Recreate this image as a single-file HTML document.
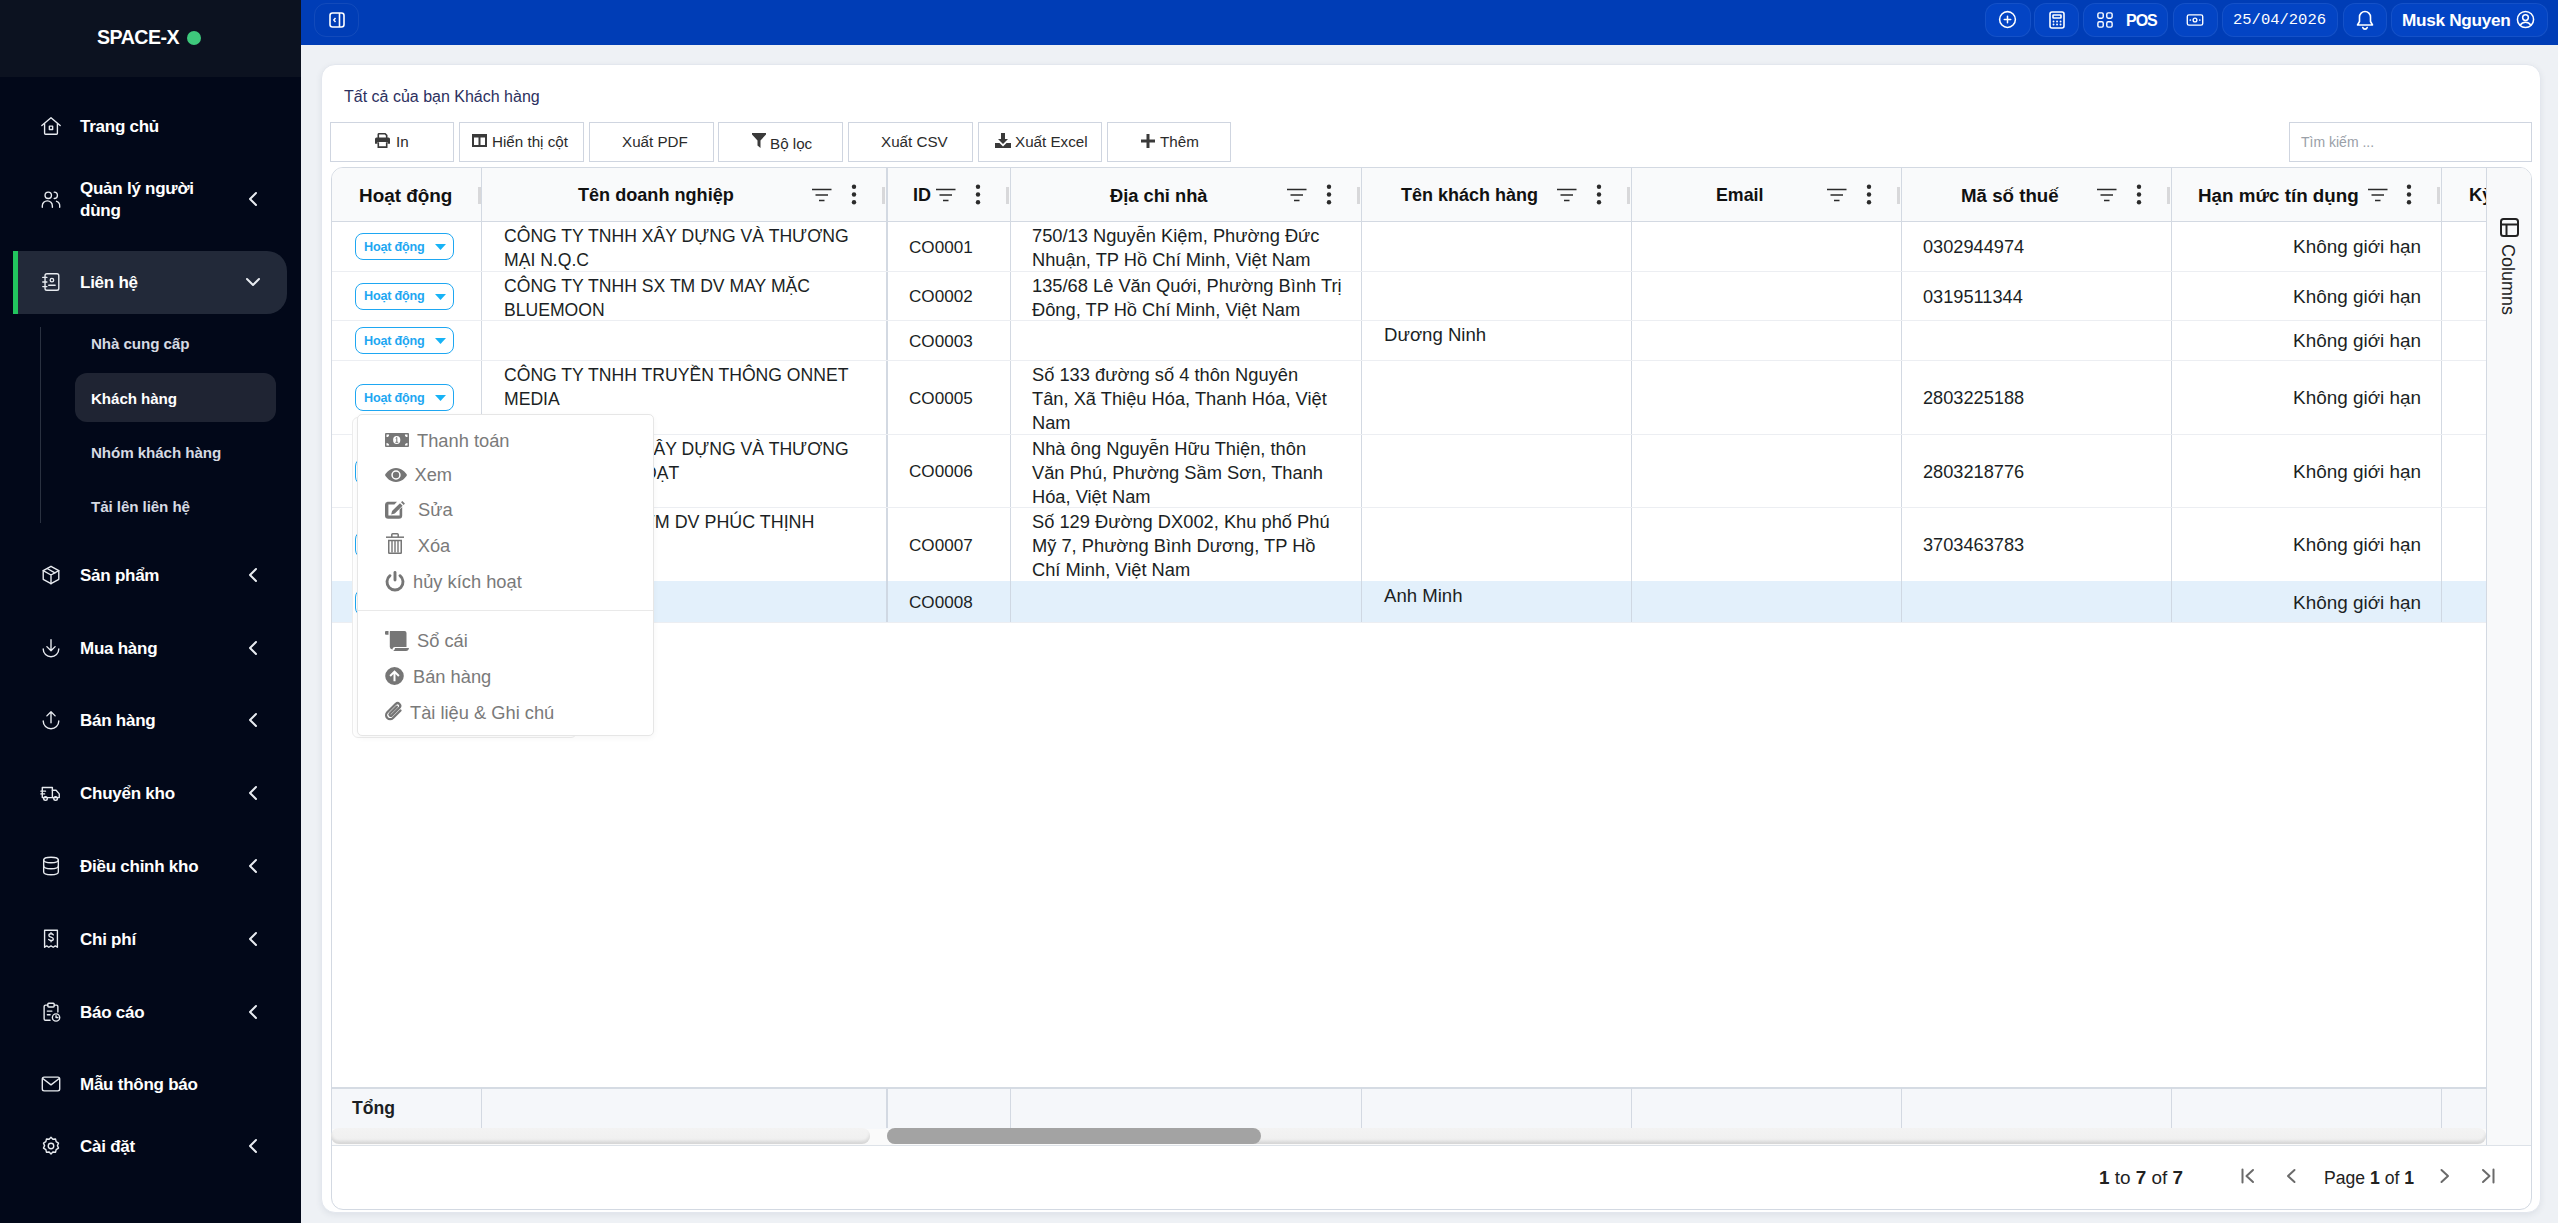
<!DOCTYPE html><html><head><meta charset="utf-8"><style>
*{box-sizing:border-box;margin:0;padding:0}
html,body{width:2558px;height:1223px;overflow:hidden;background:#eef1f5;font-family:"Liberation Sans",sans-serif;color:#1f2328}
div,span{position:absolute}
svg{position:absolute;overflow:visible}
#sb{left:0;top:0;width:301px;height:1223px;background:#020819}
#logo{left:0;top:0;width:301px;height:77px;background:#0c1220}
.nav{left:80px;font-size:17px;font-weight:700;color:#fff;line-height:22px;white-space:nowrap;letter-spacing:-0.25px}
.sub{left:91px;font-size:15.2px;font-weight:700;color:#d6dae3;line-height:20px;white-space:nowrap;letter-spacing:-0.1px}
#top{left:301px;top:0;width:2257px;height:45px;background:#003db6}
.tbtn{top:3px;height:34px;border:1px solid rgba(255,255,255,0.07);border-radius:12px;background:#0344c4}
.btn{top:122px;height:40px;border:1.5px solid #cfd5e0;background:#fff;font-size:15px;color:#2b2b2b;line-height:37px;text-align:center;white-space:nowrap}
.hd{top:169px;height:53px;line-height:53px;font-size:18.4px;font-weight:700;color:#111;white-space:nowrap}
.cell{font-size:17.6px;color:#1b1f24;line-height:24px;white-space:nowrap}
.vl{width:1px;background:#d4d9e1}
.hl{height:1px;background:#eceef2}
.badge{left:355px;width:99px;height:26px;border:1.6px solid #1ea7f2;border-radius:8px;background:#fff}
.badge span{left:8px;top:1.5px;line-height:23px;font-size:12.6px;color:#1ea7f2;font-weight:700;letter-spacing:-0.2px;white-space:nowrap}
.dd{font-size:18.3px;color:#7a7a7a;line-height:24px;white-space:nowrap}
</style></head><body>
<div id="sb"><div id="logo"></div></div>
<span style="left:97px;top:24px;font-size:19.6px;font-weight:700;color:#fff;line-height:26px;letter-spacing:-0.5px">SPACE-X</span>
<div style="left:187px;top:31px;width:14px;height:14px;border-radius:50%;background:#3ec97c"></div>
<div style="left:13px;top:251px;width:274px;height:63px;background:#222939;border-radius:0 20px 20px 0"></div>
<div style="left:13px;top:251px;width:5px;height:63px;background:#22c55e"></div>
<div style="left:40px;top:327px;width:1px;height:196px;background:#2a3140"></div>
<div style="left:75px;top:373px;width:201px;height:49px;background:#1f2433;border-radius:12px"></div>
<svg style="left:40px;top:115px" width="22" height="22" viewBox="0 0 24 24" fill="none" stroke="#e8ebf0" stroke-width="1.5" stroke-linecap="round" stroke-linejoin="round"><path d="M2 11.5L12 3l10 8.5"/><path d="M5 9.5V20a1 1 0 0 0 1 1h12a1 1 0 0 0 1-1V9.5"/><rect x="10.2" y="12.2" width="3.6" height="3.6"/></svg>
<span class="nav" style="top:116px">Trang chủ</span>
<svg style="left:40px;top:188px" width="22" height="22" viewBox="0 0 24 24" fill="none" stroke="#e8ebf0" stroke-width="1.5" stroke-linecap="round" stroke-linejoin="round"><circle cx="9" cy="8" r="3.5"/><path d="M2.5 21v-1.5a5.5 5.5 0 0 1 11 0V21"/><path d="M15.5 4.5a3.5 3.5 0 0 1 0 7"/><path d="M18 14.5a5 5 0 0 1 3.5 5V21"/></svg>
<span class="nav" style="top:178px">Quản lý người</span>
<span class="nav" style="top:200px">dùng</span>
<svg style="left:246px;top:191px" width="14" height="16" viewBox="0 0 14 16" fill="none" stroke="#e8ebf0" stroke-width="2" stroke-linecap="round" stroke-linejoin="round"><path d="M10 2L4 8l6 6"/></svg>
<svg style="left:40px;top:271px" width="22" height="22" viewBox="0 0 24 24" fill="none" stroke="#e8ebf0" stroke-width="1.5" stroke-linecap="round" stroke-linejoin="round"><rect x="5.5" y="3" width="15" height="18" rx="2"/><circle cx="13" cy="10" r="1.9"/><path d="M9.5 15.5h7"/><path d="M3 7h4.5M3 12h4.5M3 17h4.5"/></svg>
<span class="nav" style="top:272px">Liên hệ</span>
<svg style="left:245px;top:276px" width="16" height="12" viewBox="0 0 16 12" fill="none" stroke="#e8ebf0" stroke-width="2" stroke-linecap="round" stroke-linejoin="round"><path d="M2 3l6 6 6-6"/></svg>
<svg style="left:40px;top:564px" width="22" height="22" viewBox="0 0 24 24" fill="none" stroke="#e8ebf0" stroke-width="1.5" stroke-linecap="round" stroke-linejoin="round"><path d="M12 2.5l8.5 4.8v9.4L12 21.5l-8.5-4.8V7.3z"/><path d="M3.5 7.3L12 12l8.5-4.7M12 12v9.5"/><path d="M7.8 4.9l8.5 4.8"/></svg>
<span class="nav" style="top:565px">Sản phẩm</span>
<svg style="left:246px;top:567px" width="14" height="16" viewBox="0 0 14 16" fill="none" stroke="#e8ebf0" stroke-width="2" stroke-linecap="round" stroke-linejoin="round"><path d="M10 2L4 8l6 6"/></svg>
<svg style="left:40px;top:637px" width="22" height="22" viewBox="0 0 24 24" fill="none" stroke="#e8ebf0" stroke-width="1.5" stroke-linecap="round" stroke-linejoin="round"><path d="M12 3v12M7.5 10.5L12 15l4.5-4.5"/><path d="M3.5 13a8.5 8.5 0 0 0 17 0"/></svg>
<span class="nav" style="top:638px">Mua hàng</span>
<svg style="left:246px;top:640px" width="14" height="16" viewBox="0 0 14 16" fill="none" stroke="#e8ebf0" stroke-width="2" stroke-linecap="round" stroke-linejoin="round"><path d="M10 2L4 8l6 6"/></svg>
<svg style="left:40px;top:709px" width="22" height="22" viewBox="0 0 24 24" fill="none" stroke="#e8ebf0" stroke-width="1.5" stroke-linecap="round" stroke-linejoin="round"><path d="M12 15V3M7.5 7.5L12 3l4.5 4.5"/><path d="M3.5 13a8.5 8.5 0 0 0 17 0"/></svg>
<span class="nav" style="top:710px">Bán hàng</span>
<svg style="left:246px;top:712px" width="14" height="16" viewBox="0 0 14 16" fill="none" stroke="#e8ebf0" stroke-width="2" stroke-linecap="round" stroke-linejoin="round"><path d="M10 2L4 8l6 6"/></svg>
<svg style="left:40px;top:782px" width="22" height="22" viewBox="0 0 24 24" fill="none" stroke="#e8ebf0" stroke-width="1.5" stroke-linecap="round" stroke-linejoin="round"><path d="M2.5 6h11v11h-11z"/><path d="M13.5 9h4l3.5 4v4h-7.5"/><circle cx="6" cy="18" r="2"/><circle cx="17" cy="18" r="2"/><path d="M1 10h5M1 13h4"/></svg>
<span class="nav" style="top:783px">Chuyển kho</span>
<svg style="left:246px;top:785px" width="14" height="16" viewBox="0 0 14 16" fill="none" stroke="#e8ebf0" stroke-width="2" stroke-linecap="round" stroke-linejoin="round"><path d="M10 2L4 8l6 6"/></svg>
<svg style="left:40px;top:855px" width="22" height="22" viewBox="0 0 24 24" fill="none" stroke="#e8ebf0" stroke-width="1.5" stroke-linecap="round" stroke-linejoin="round"><ellipse cx="12" cy="5.5" rx="8" ry="3"/><path d="M4 5.5v13c0 1.7 3.6 3 8 3s8-1.3 8-3v-13"/><path d="M4 12c0 1.7 3.6 3 8 3s8-1.3 8-3"/></svg>
<span class="nav" style="top:856px">Điều chỉnh kho</span>
<svg style="left:246px;top:858px" width="14" height="16" viewBox="0 0 14 16" fill="none" stroke="#e8ebf0" stroke-width="2" stroke-linecap="round" stroke-linejoin="round"><path d="M10 2L4 8l6 6"/></svg>
<svg style="left:40px;top:928px" width="22" height="22" viewBox="0 0 24 24" fill="none" stroke="#e8ebf0" stroke-width="1.5" stroke-linecap="round" stroke-linejoin="round"><path d="M5 2.5h14V21l-2.3-1.5-2.3 1.5-2.4-1.5-2.4 1.5-2.3-1.5L5 21z"/><path d="M14.5 7.5c-.5-.8-1.4-1.2-2.5-1.2-1.4 0-2.3.7-2.3 1.8 0 2.5 4.8 1.3 4.8 3.8 0 1.1-1 1.8-2.5 1.8-1.1 0-2-.4-2.6-1.2M12 5v1.3M12 13.5V15"/></svg>
<span class="nav" style="top:929px">Chi phí</span>
<svg style="left:246px;top:931px" width="14" height="16" viewBox="0 0 14 16" fill="none" stroke="#e8ebf0" stroke-width="2" stroke-linecap="round" stroke-linejoin="round"><path d="M10 2L4 8l6 6"/></svg>
<svg style="left:40px;top:1001px" width="22" height="22" viewBox="0 0 24 24" fill="none" stroke="#e8ebf0" stroke-width="1.5" stroke-linecap="round" stroke-linejoin="round"><path d="M15.5 4.5H18a1.5 1.5 0 0 1 1.5 1.5v6"/><path d="M11 21H6a1.5 1.5 0 0 1-1.5-1.5V6A1.5 1.5 0 0 1 6 4.5h2.5"/><rect x="8.5" y="2.5" width="7" height="4" rx="1"/><path d="M8 11h5M8 15h3"/><circle cx="17.5" cy="18" r="4"/><path d="M17.5 16v2h2"/></svg>
<span class="nav" style="top:1002px">Báo cáo</span>
<svg style="left:246px;top:1004px" width="14" height="16" viewBox="0 0 14 16" fill="none" stroke="#e8ebf0" stroke-width="2" stroke-linecap="round" stroke-linejoin="round"><path d="M10 2L4 8l6 6"/></svg>
<svg style="left:40px;top:1073px" width="22" height="22" viewBox="0 0 24 24" fill="none" stroke="#e8ebf0" stroke-width="1.5" stroke-linecap="round" stroke-linejoin="round"><rect x="2.5" y="4.5" width="19" height="15" rx="2"/><path d="M3 6l9 7 9-7"/></svg>
<span class="nav" style="top:1074px">Mẫu thông báo</span>
<svg style="left:40px;top:1135px" width="22" height="22" viewBox="0 0 24 24" fill="none" stroke="#e8ebf0" stroke-width="1.5" stroke-linecap="round" stroke-linejoin="round"><circle cx="12" cy="12" r="3"/><path d="M12 2.5l2 2.2 3-.3.6 2.9 2.6 1.6-1.2 2.7 1.2 2.7-2.6 1.6-.6 2.9-3-.3-2 2.2-2-2.2-3 .3-.6-2.9-2.6-1.6 1.2-2.7-1.2-2.7 2.6-1.6.6-2.9 3 .3z"/></svg>
<span class="nav" style="top:1136px">Cài đặt</span>
<svg style="left:246px;top:1138px" width="14" height="16" viewBox="0 0 14 16" fill="none" stroke="#e8ebf0" stroke-width="2" stroke-linecap="round" stroke-linejoin="round"><path d="M10 2L4 8l6 6"/></svg>
<span class="sub" style="top:334px;color:#d6dae3">Nhà cung cấp</span>
<span class="sub" style="top:389px;color:#ffffff">Khách hàng</span>
<span class="sub" style="top:443px;color:#d6dae3">Nhóm khách hàng</span>
<span class="sub" style="top:497px;color:#d6dae3">Tải lên liên hệ</span>
<div id="top"></div>
<div class="tbtn" style="left:314px;width:45px;background:transparent"></div>
<svg style="left:329px;top:12px" width="16" height="16" viewBox="0 0 16 16" fill="none" stroke="#fff" stroke-width="1.6"><rect x="1" y="1" width="14" height="14" rx="2.5"/><path d="M10.5 1v14"/><path d="M6.5 6L4.8 8l1.7 2" stroke-width="1.4"/></svg>
<div class="tbtn" style="left:1985px;width:46px"></div>
<div class="tbtn" style="left:2034px;width:45px"></div>
<div class="tbtn" style="left:2083px;width:85px"></div>
<div class="tbtn" style="left:2173px;width:45px"></div>
<div class="tbtn" style="left:2222px;width:116px"></div>
<div class="tbtn" style="left:2343px;width:44px"></div>
<div class="tbtn" style="left:2391px;width:157px"></div>
<svg style="left:1998px;top:10px" width="19" height="19" viewBox="0 0 20 20" fill="none" stroke="#fff" stroke-width="1.6" stroke-linecap="round" stroke-linejoin="round"><circle cx="10" cy="10" r="8.3"/><path d="M10 6.6v6.8M6.6 10h6.8"/></svg>
<svg style="left:2049px;top:11px" width="16" height="18" viewBox="0 0 16 18" fill="none" stroke="#fff" stroke-width="1.6" stroke-linecap="round" stroke-linejoin="round"><rect x="1" y="1" width="14" height="16" rx="2"/><rect x="4" y="4" width="8" height="3" rx=".5"/><path d="M4.5 10.5h.1M8 10.5h.1M11.5 10.5h.1M4.5 13.5h.1M8 13.5h.1M11.5 13.5h.1" stroke-width="1.8"/></svg>
<svg style="left:2097px;top:12px" width="16" height="16" viewBox="0 0 18 18" fill="none" stroke="#fff" stroke-width="1.6" stroke-linecap="round" stroke-linejoin="round" stroke-width="1.9"><rect x="1" y="1" width="6" height="6" rx="1.6"/><rect x="11" y="1" width="6" height="6" rx="1.6"/><rect x="1" y="11" width="6" height="6" rx="1.6"/><rect x="11" y="11" width="6" height="6" rx="1.6"/></svg>
<span style="left:2126px;top:10px;font-size:16px;font-weight:700;color:#fff;line-height:22px;letter-spacing:-1px">POS</span>
<svg style="left:2186px;top:14px" width="18" height="12" viewBox="0 0 20 14" fill="none" stroke="#fff" stroke-width="1.6" stroke-linecap="round" stroke-linejoin="round" stroke-width="1.8"><rect x="1" y="1" width="18" height="12" rx="2"/><circle cx="10" cy="7" r="2.2"/><path d="M4.5 7h.1M15.5 7h.1" stroke-width="2"/></svg>
<span style="left:2233px;top:9px;font-family:'Liberation Mono',monospace;font-size:15.5px;color:#fff;line-height:22px">25/04/2026</span>
<svg style="left:2356px;top:10px" width="18" height="20" viewBox="0 0 18 20" fill="none" stroke="#fff" stroke-width="1.6" stroke-linecap="round" stroke-linejoin="round"><path d="M9 1.5a5.5 5.5 0 0 0-5.5 5.5v4.5L1.5 15h15l-2-3.5V7A5.5 5.5 0 0 0 9 1.5z"/><path d="M6.8 17.5a2.3 2.3 0 0 0 4.4 0"/></svg>
<span style="left:2402px;top:8px;font-size:17.2px;font-weight:700;color:#fff;line-height:24px;letter-spacing:-0.3px">Musk Nguyen</span>
<svg style="left:2516px;top:10px" width="19" height="19" viewBox="0 0 20 20" fill="none" stroke="#fff" stroke-width="1.6" stroke-linecap="round" stroke-linejoin="round"><circle cx="10" cy="10" r="8.5"/><circle cx="10" cy="8" r="3"/><path d="M4.5 16a6.5 6.5 0 0 1 11 0"/></svg>
<div style="left:321px;top:64px;width:2220px;height:1149px;background:#fff;border:1px solid #e3e7ee;border-radius:14px;box-shadow:0 2px 6px rgba(40,50,80,0.08)"></div>
<span style="left:344px;top:87px;font-size:16px;color:#2c3060;line-height:20px">Tất cả của bạn Khách hàng</span>
<div class="btn" style="left:330px;width:124px"></div>
<div class="btn" style="left:459px;width:125px"></div>
<div class="btn" style="left:589px;width:125px"></div>
<div class="btn" style="left:718px;width:125px"></div>
<div class="btn" style="left:848px;width:125px"></div>
<div class="btn" style="left:978px;width:124px"></div>
<div class="btn" style="left:1107px;width:124px"></div>
<span style="left:396px;top:132px;font-size:15.2px;color:#2b2b2b;line-height:20px;white-space:nowrap">In</span>
<span style="left:492px;top:132px;font-size:15.2px;color:#2b2b2b;line-height:20px;white-space:nowrap">Hiển thị cột</span>
<span style="left:622px;top:132px;font-size:15.2px;color:#2b2b2b;line-height:20px;white-space:nowrap">Xuất PDF</span>
<span style="left:770px;top:134px;font-size:15.2px;color:#2b2b2b;line-height:20px;white-space:nowrap">Bộ lọc</span>
<span style="left:881px;top:132px;font-size:15.2px;color:#2b2b2b;line-height:20px;white-space:nowrap">Xuất CSV</span>
<span style="left:1015px;top:132px;font-size:15.2px;color:#2b2b2b;line-height:20px;white-space:nowrap">Xuất Excel</span>
<span style="left:1160px;top:132px;font-size:15.2px;color:#2b2b2b;line-height:20px;white-space:nowrap">Thêm</span>
<svg style="left:375px;top:133px" width="15" height="15" viewBox="0 0 15 15"><path d="M3.3 5V1.3A.6.6 0 0 1 3.9.8h6.2l1.6 1.6V5" fill="none" stroke="#3a3a3a" stroke-width="1.6"/><path d="M1.5 4.6h12A1.5 1.5 0 0 1 15 6.1v4.6h-2.5V9H2.5v1.7H0V6.1A1.5 1.5 0 0 1 1.5 4.6z" fill="#3a3a3a"/><path d="M3.3 9.2v4.9h8.4V9.2" fill="none" stroke="#3a3a3a" stroke-width="1.6"/></svg>
<svg style="left:472px;top:134px" width="15" height="13" viewBox="0 0 15 13" fill="#3a3a3a"><path d="M0 0h15v13H0zM2 3.5V11h4.5V3.5zM8.5 3.5V11H13V3.5z" fill-rule="evenodd"/></svg>
<svg style="left:752px;top:133px" width="14" height="15" viewBox="0 0 14 15" fill="#3a3a3a"><path d="M0 0h14v1.5L8.5 7.5V15L5.5 12.5V7.5L0 1.5z"/></svg>
<svg style="left:995px;top:133px" width="16" height="15" viewBox="0 0 16 15" fill="#3a3a3a"><path d="M6 0h4v6h3l-5 5-5-5h3z"/><path d="M0 10h4.5l3.5 3.5 3.5-3.5H16v5H0z"/></svg>
<svg style="left:1141px;top:134px" width="14" height="14" viewBox="0 0 14 14" fill="#3a3a3a"><path d="M5.5 0h3v5.5H14v3H8.5V14h-3V8.5H0v-3h5.5z"/></svg>
<div style="left:2289px;top:122px;width:243px;height:40px;border:1.5px solid #cfd5e0;background:#fff"></div>
<span style="left:2301px;top:133px;font-size:14px;color:#9aa0a8;line-height:18px">Tìm kiếm ...</span>
<div style="left:331px;top:167px;width:2201px;height:1043px;border:1px solid #d3d9e2;border-radius:12px;background:#fff;overflow:hidden"><div style="left:0;top:0;width:2201px;height:54px;background:#f9fafb;border-bottom:1.5px solid #d3d9e2"></div><div style="left:2154px;top:0;width:46px;height:978px;background:#f8f9fa;border-left:1px solid #d3d9e2"></div><div style="left:0;top:919px;width:2154px;height:42px;background:#f5f7fa;border-top:2px solid #d5dbe3"></div><div style="left:0;top:961px;width:2154px;height:17px;background:#fafafa"></div><div style="left:0;top:977px;width:2201px;height:1px;background:#dde2e8"></div></div>
<div style="left:331px;top:1128px;width:539px;height:16px;border-radius:8px;background:linear-gradient(#f3f3f3,#efefef);box-shadow:inset 0 -3px 3px rgba(0,0,0,0.10)"></div>
<div style="left:887px;top:1128px;width:1599px;height:16px;border-radius:8px;background:linear-gradient(#f3f3f3,#efefef);box-shadow:inset 0 -3px 3px rgba(0,0,0,0.10)"></div>
<div style="left:887px;top:1128px;width:374px;height:16px;border-radius:8px;background:#a3a3a3"></div>
<div style="left:481px;top:168px;width:1px;height:53px;background:#d3d9e2"></div>
<div style="left:481px;top:222px;width:1px;height:400px;background:#d3d9e2"></div>
<div style="left:481px;top:1088px;width:1px;height:40px;background:#d3d9e2"></div>
<div style="left:886px;top:168px;width:2px;height:53px;background:#d3d9e2"></div>
<div style="left:886px;top:222px;width:2px;height:400px;background:#d3d9e2"></div>
<div style="left:886px;top:1088px;width:2px;height:40px;background:#d3d9e2"></div>
<div style="left:1010px;top:168px;width:1px;height:53px;background:#d3d9e2"></div>
<div style="left:1010px;top:222px;width:1px;height:400px;background:#d3d9e2"></div>
<div style="left:1010px;top:1088px;width:1px;height:40px;background:#d3d9e2"></div>
<div style="left:1361px;top:168px;width:1px;height:53px;background:#d3d9e2"></div>
<div style="left:1361px;top:222px;width:1px;height:400px;background:#d3d9e2"></div>
<div style="left:1361px;top:1088px;width:1px;height:40px;background:#d3d9e2"></div>
<div style="left:1631px;top:168px;width:1px;height:53px;background:#d3d9e2"></div>
<div style="left:1631px;top:222px;width:1px;height:400px;background:#d3d9e2"></div>
<div style="left:1631px;top:1088px;width:1px;height:40px;background:#d3d9e2"></div>
<div style="left:1901px;top:168px;width:1px;height:53px;background:#d3d9e2"></div>
<div style="left:1901px;top:222px;width:1px;height:400px;background:#d3d9e2"></div>
<div style="left:1901px;top:1088px;width:1px;height:40px;background:#d3d9e2"></div>
<div style="left:2171px;top:168px;width:1px;height:53px;background:#d3d9e2"></div>
<div style="left:2171px;top:222px;width:1px;height:400px;background:#d3d9e2"></div>
<div style="left:2171px;top:1088px;width:1px;height:40px;background:#d3d9e2"></div>
<div style="left:2441px;top:168px;width:1px;height:53px;background:#d3d9e2"></div>
<div style="left:2441px;top:222px;width:1px;height:400px;background:#d3d9e2"></div>
<div style="left:2441px;top:1088px;width:1px;height:40px;background:#d3d9e2"></div>
<div style="left:332px;top:271px;width:2154px;height:1px;background:#eceef2"></div>
<div style="left:332px;top:320px;width:2154px;height:1px;background:#eceef2"></div>
<div style="left:332px;top:360px;width:2154px;height:1px;background:#eceef2"></div>
<div style="left:332px;top:434px;width:2154px;height:1px;background:#eceef2"></div>
<div style="left:332px;top:507px;width:2154px;height:1px;background:#eceef2"></div>
<div style="left:332px;top:581px;width:2154px;height:41px;background:#e3f0fb"></div>
<div style="left:481px;top:581px;width:1px;height:41px;background:#cfd8e3"></div>
<div style="left:886px;top:581px;width:2px;height:41px;background:#cfd8e3"></div>
<div style="left:1010px;top:581px;width:1px;height:41px;background:#cfd8e3"></div>
<div style="left:1361px;top:581px;width:1px;height:41px;background:#cfd8e3"></div>
<div style="left:1631px;top:581px;width:1px;height:41px;background:#cfd8e3"></div>
<div style="left:1901px;top:581px;width:1px;height:41px;background:#cfd8e3"></div>
<div style="left:2171px;top:581px;width:1px;height:41px;background:#cfd8e3"></div>
<div style="left:2441px;top:581px;width:1px;height:41px;background:#cfd8e3"></div>
<div style="left:332px;top:622px;width:2154px;height:1px;background:#eceef2"></div>
<span class="hd" style="left:359px;font-size:18.9px">Hoạt động</span>
<div style="left:478px;top:187px;width:3px;height:17px;background:#d8d8da"></div>
<span class="hd" style="left:578px;font-size:18.1px">Tên doanh nghiệp</span>
<svg style="left:812px;top:188px" width="20" height="14" viewBox="0 0 20 14" fill="none" stroke="#2b2b2b" stroke-width="1.7"><path d="M0 1.5h19.5M3.5 7h12.5M7 12.5h5.5"/></svg>
<svg style="left:851px;top:184px" width="6" height="21" viewBox="0 0 6 21" fill="#2b2b2b"><circle cx="3" cy="2.8" r="2.2"/><circle cx="3" cy="10.5" r="2.2"/><circle cx="3" cy="18.2" r="2.2"/></svg>
<div style="left:882px;top:187px;width:3px;height:17px;background:#d8d8da"></div>
<span class="hd" style="left:913px;font-size:18px">ID</span>
<svg style="left:936px;top:188px" width="20" height="14" viewBox="0 0 20 14" fill="none" stroke="#2b2b2b" stroke-width="1.7"><path d="M0 1.5h19.5M3.5 7h12.5M7 12.5h5.5"/></svg>
<svg style="left:975px;top:184px" width="6" height="21" viewBox="0 0 6 21" fill="#2b2b2b"><circle cx="3" cy="2.8" r="2.2"/><circle cx="3" cy="10.5" r="2.2"/><circle cx="3" cy="18.2" r="2.2"/></svg>
<div style="left:1006px;top:187px;width:3px;height:17px;background:#d8d8da"></div>
<span class="hd" style="left:1110px;font-size:18.3px">Địa chỉ nhà</span>
<svg style="left:1287px;top:188px" width="20" height="14" viewBox="0 0 20 14" fill="none" stroke="#2b2b2b" stroke-width="1.7"><path d="M0 1.5h19.5M3.5 7h12.5M7 12.5h5.5"/></svg>
<svg style="left:1326px;top:184px" width="6" height="21" viewBox="0 0 6 21" fill="#2b2b2b"><circle cx="3" cy="2.8" r="2.2"/><circle cx="3" cy="10.5" r="2.2"/><circle cx="3" cy="18.2" r="2.2"/></svg>
<div style="left:1357px;top:187px;width:3px;height:17px;background:#d8d8da"></div>
<span class="hd" style="left:1401px;font-size:18px">Tên khách hàng</span>
<svg style="left:1557px;top:188px" width="20" height="14" viewBox="0 0 20 14" fill="none" stroke="#2b2b2b" stroke-width="1.7"><path d="M0 1.5h19.5M3.5 7h12.5M7 12.5h5.5"/></svg>
<svg style="left:1596px;top:184px" width="6" height="21" viewBox="0 0 6 21" fill="#2b2b2b"><circle cx="3" cy="2.8" r="2.2"/><circle cx="3" cy="10.5" r="2.2"/><circle cx="3" cy="18.2" r="2.2"/></svg>
<div style="left:1627px;top:187px;width:3px;height:17px;background:#d8d8da"></div>
<span class="hd" style="left:1716px;font-size:17.8px">Email</span>
<svg style="left:1827px;top:188px" width="20" height="14" viewBox="0 0 20 14" fill="none" stroke="#2b2b2b" stroke-width="1.7"><path d="M0 1.5h19.5M3.5 7h12.5M7 12.5h5.5"/></svg>
<svg style="left:1866px;top:184px" width="6" height="21" viewBox="0 0 6 21" fill="#2b2b2b"><circle cx="3" cy="2.8" r="2.2"/><circle cx="3" cy="10.5" r="2.2"/><circle cx="3" cy="18.2" r="2.2"/></svg>
<div style="left:1897px;top:187px;width:3px;height:17px;background:#d8d8da"></div>
<span class="hd" style="left:1961px;font-size:18.7px">Mã số thuế</span>
<svg style="left:2097px;top:188px" width="20" height="14" viewBox="0 0 20 14" fill="none" stroke="#2b2b2b" stroke-width="1.7"><path d="M0 1.5h19.5M3.5 7h12.5M7 12.5h5.5"/></svg>
<svg style="left:2136px;top:184px" width="6" height="21" viewBox="0 0 6 21" fill="#2b2b2b"><circle cx="3" cy="2.8" r="2.2"/><circle cx="3" cy="10.5" r="2.2"/><circle cx="3" cy="18.2" r="2.2"/></svg>
<div style="left:2167px;top:187px;width:3px;height:17px;background:#d8d8da"></div>
<span class="hd" style="left:2198px;font-size:18.8px">Hạn mức tín dụng</span>
<svg style="left:2368px;top:188px" width="20" height="14" viewBox="0 0 20 14" fill="none" stroke="#2b2b2b" stroke-width="1.7"><path d="M0 1.5h19.5M3.5 7h12.5M7 12.5h5.5"/></svg>
<svg style="left:2406px;top:184px" width="6" height="21" viewBox="0 0 6 21" fill="#2b2b2b"><circle cx="3" cy="2.8" r="2.2"/><circle cx="3" cy="10.5" r="2.2"/><circle cx="3" cy="18.2" r="2.2"/></svg>
<div style="left:2437px;top:187px;width:3px;height:17px;background:#d8d8da"></div>
<div style="left:2441px;top:168px;width:45px;height:53px;overflow:hidden"><span class="hd" style="left:28px;top:0">Kỳ hạn</span></div>
<svg style="left:2500px;top:218px" width="19" height="19" viewBox="0 0 19 19" fill="none" stroke="#222" stroke-width="2"><rect x="1" y="1" width="17" height="17" rx="2.5"/><path d="M1 6.5h17M6.5 6.5V18"/></svg>
<span style="left:2475px;top:262px;width:66px;height:22px;font-size:18px;color:#222;line-height:22px;transform:rotate(90deg);transform-origin:center;text-align:left;padding-left:4px;white-space:nowrap">Columns</span>
<div style="left:352px;top:417px;width:225px;height:321px;background:#fff;border:1px solid #ececec;border-radius:6px"></div>
<div class="badge" style="top:233.0px;height:27px"><span>Hoạt động</span><svg style="left:79px;top:10px" width="11" height="6" viewBox="0 0 11 6" fill="#17b3f6"><path d="M0 0h11L5.5 6z"/></svg></div>
<div class="badge" style="top:282.5px;height:27px"><span>Hoạt động</span><svg style="left:79px;top:10px" width="11" height="6" viewBox="0 0 11 6" fill="#17b3f6"><path d="M0 0h11L5.5 6z"/></svg></div>
<div class="badge" style="top:327.0px;height:27px"><span>Hoạt động</span><svg style="left:79px;top:10px" width="11" height="6" viewBox="0 0 11 6" fill="#17b3f6"><path d="M0 0h11L5.5 6z"/></svg></div>
<div class="badge" style="top:384.0px;height:27px"><span>Hoạt động</span><svg style="left:79px;top:10px" width="11" height="6" viewBox="0 0 11 6" fill="#17b3f6"><path d="M0 0h11L5.5 6z"/></svg></div>
<div class="badge" style="top:457.5px;height:27px"><span>Hoạt động</span><svg style="left:79px;top:10px" width="11" height="6" viewBox="0 0 11 6" fill="#17b3f6"><path d="M0 0h11L5.5 6z"/></svg></div>
<div class="badge" style="top:531.0px;height:27px"><span>Hoạt động</span><svg style="left:79px;top:10px" width="11" height="6" viewBox="0 0 11 6" fill="#17b3f6"><path d="M0 0h11L5.5 6z"/></svg></div>
<div class="badge" style="top:588.5px;height:27px"><span>Hoạt động</span><svg style="left:79px;top:10px" width="11" height="6" viewBox="0 0 11 6" fill="#17b3f6"><path d="M0 0h11L5.5 6z"/></svg></div>
<span class="cell" style="left:504px;top:224.0px;font-size:17.6px">CÔNG TY TNHH XÂY DỰNG VÀ THƯƠNG<br>MẠI N.Q.C</span>
<span class="cell" style="left:504px;top:274.0px;font-size:17.6px">CÔNG TY TNHH SX TM DV MAY MẶC<br>BLUEMOON</span>
<span class="cell" style="left:504px;top:363.0px;font-size:17.6px">CÔNG TY TNHH TRUYỀN THÔNG ONNET<br>MEDIA</span>
<span class="cell" style="left:504px;top:437.0px;font-size:17.6px">CÔNG TY TNHH XÂY DỰNG VÀ THƯƠNG<br><span style="position:relative;left:13px">MẠI DỊCH VỤ HOẠT</span></span>
<span class="cell" style="left:504px;top:510.0px;font-size:17.6px"><span style="position:relative;font-size:17.9px">CÔNG TY TNHH TM DV PHÚC THỊNH</span></span>
<span class="cell" style="left:909px;top:235.5px;font-size:17.1px">CO0001</span>
<span class="cell" style="left:909px;top:285.0px;font-size:17.1px">CO0002</span>
<span class="cell" style="left:909px;top:329.5px;font-size:17.1px">CO0003</span>
<span class="cell" style="left:909px;top:386.5px;font-size:17.1px">CO0005</span>
<span class="cell" style="left:909px;top:460.0px;font-size:17.1px">CO0006</span>
<span class="cell" style="left:909px;top:533.5px;font-size:17.1px">CO0007</span>
<span class="cell" style="left:909px;top:591.0px;font-size:17.1px">CO0008</span>
<span class="cell" style="left:1032px;top:224.0px;font-size:18.3px">750/13 Nguyễn Kiệm, Phường Đức<br>Nhuận, TP Hồ Chí Minh, Việt Nam</span>
<span class="cell" style="left:1032px;top:274.0px;font-size:18.3px">135/68 Lê Văn Quới, Phường Bình Trị<br>Đông, TP Hồ Chí Minh, Việt Nam</span>
<span class="cell" style="left:1032px;top:363.0px;font-size:18.3px">Số 133 đường số 4 thôn Nguyên<br>Tân, Xã Thiệu Hóa, Thanh Hóa, Việt<br>Nam</span>
<span class="cell" style="left:1032px;top:437.0px;font-size:18.3px">Nhà ông Nguyễn Hữu Thiện, thôn<br>Văn Phú, Phường Sầm Sơn, Thanh<br>Hóa, Việt Nam</span>
<span class="cell" style="left:1032px;top:510.0px;font-size:18.3px">Số 129 Đường DX002, Khu phố Phú<br>Mỹ 7, Phường Bình Dương, TP Hồ<br>Chí Minh, Việt Nam</span>
<span class="cell" style="left:1384px;top:323.0px;font-size:18.6px">Dương Ninh</span>
<span class="cell" style="left:1384px;top:584.0px;font-size:18.6px">Anh Minh</span>
<span class="cell" style="left:1923px;top:235.0px;font-size:18.2px">0302944974</span>
<span class="cell" style="left:1923px;top:284.5px;font-size:18.2px">0319511344</span>
<span class="cell" style="left:1923px;top:386.0px;font-size:18.2px">2803225188</span>
<span class="cell" style="left:1923px;top:459.5px;font-size:18.2px">2803218776</span>
<span class="cell" style="left:1923px;top:533.0px;font-size:18.2px">3703463783</span>
<span class="cell" style="right:137px;top:235.0px;font-size:18.9px;text-align:right">Không giới hạn</span>
<span class="cell" style="right:137px;top:284.5px;font-size:18.9px;text-align:right">Không giới hạn</span>
<span class="cell" style="right:137px;top:329.0px;font-size:18.9px;text-align:right">Không giới hạn</span>
<span class="cell" style="right:137px;top:386.0px;font-size:18.9px;text-align:right">Không giới hạn</span>
<span class="cell" style="right:137px;top:459.5px;font-size:18.9px;text-align:right">Không giới hạn</span>
<span class="cell" style="right:137px;top:533.0px;font-size:18.9px;text-align:right">Không giới hạn</span>
<span class="cell" style="right:137px;top:590.5px;font-size:18.9px;text-align:right">Không giới hạn</span>
<span style="left:352px;top:1097px;font-size:17.6px;font-weight:700;color:#1b1f24;line-height:22px">Tổng</span>
<span style="left:2099px;top:1166px;font-size:18.9px;color:#222;line-height:24px;white-space:nowrap"><b>1</b> to <b>7</b> of <b>7</b></span>
<span style="left:2324px;top:1166px;font-size:17.6px;color:#222;line-height:24px;white-space:nowrap">Page <b>1</b> of <b>1</b></span>
<svg style="left:2241px;top:1168px" width="14" height="16" viewBox="0 0 14 16" fill="none" stroke="#6a6a6a" stroke-width="2" stroke-linecap="round" stroke-linejoin="round"><path d="M1.5 1.5v13M12 2L5.5 8l6.5 6"/></svg>
<svg style="left:2286px;top:1168px" width="10" height="16" viewBox="0 0 10 16" fill="none" stroke="#6a6a6a" stroke-width="2" stroke-linecap="round" stroke-linejoin="round"><path d="M8.5 2L2 8l6.5 6"/></svg>
<svg style="left:2440px;top:1168px" width="10" height="16" viewBox="0 0 10 16" fill="none" stroke="#6a6a6a" stroke-width="2" stroke-linecap="round" stroke-linejoin="round"><path d="M1.5 2L8 8l-6.5 6"/></svg>
<svg style="left:2481px;top:1168px" width="14" height="16" viewBox="0 0 14 16" fill="none" stroke="#6a6a6a" stroke-width="2" stroke-linecap="round" stroke-linejoin="round"><path d="M12.5 1.5v13M2 2l6.5 6L2 14"/></svg>
<div style="left:357px;top:414px;width:297px;height:322px;background:#fff;border:1px solid #e6e6e6;border-radius:5px;box-shadow:0 2px 6px rgba(0,0,0,0.04)"></div>
<div style="left:358px;top:610px;width:295px;height:1px;background:#e9e9e9"></div>
<span class="dd" style="left:417px;top:428.7px">Thanh toán</span>
<span class="dd" style="left:414.5px;top:463.2px">Xem</span>
<span class="dd" style="left:418px;top:498.4px">Sửa</span>
<span class="dd" style="left:417.7px;top:534.4px">Xóa</span>
<span class="dd" style="left:413px;top:569.5px">hủy kích hoạt</span>
<span class="dd" style="left:417px;top:629.2px">Sổ cái</span>
<span class="dd" style="left:413px;top:664.7px">Bán hàng</span>
<span class="dd" style="left:410px;top:700.7px">Tài liệu &amp; Ghi chú</span>
<svg style="left:385px;top:433px" width="24" height="14" viewBox="0 0 24 14"><rect x="0" y="0" width="24" height="14" rx="1" fill="#767676"/><ellipse cx="11.7" cy="7" rx="3.6" ry="4.1" fill="#fff"/><path d="M10.7 5.3l1.1-.8v4.6M10.4 9.3h2.8" fill="none" stroke="#767676" stroke-width="1"/><path d="M1.5 1.5h2.6a2.6 2.6 0 0 1-2.6 2.6zM22.5 1.5h-2.6a2.6 2.6 0 0 0 2.6 2.6zM1.5 12.5h2.6a2.6 2.6 0 0 0-2.6-2.6zM22.5 12.5h-2.6a2.6 2.6 0 0 1 2.6-2.6z" fill="#fff"/></svg>
<svg style="left:385px;top:468px" width="22" height="14" viewBox="0 0 22 14" fill="#767676"><path fill-rule="evenodd" d="M11 0C5.5 0 1.5 4 0 7c1.5 3 5.5 7 11 7s9.5-4 11-7C20.5 4 16.5 0 11 0zM11 2.3a4.7 4.7 0 1 1 0 9.4a4.7 4.7 0 1 1 0-9.4zM11 3.8a3.2 3.2 0 1 0 0 6.4a3.2 3.2 0 1 0 0-6.4z"/><circle cx="11" cy="7" r="2.3"/></svg>
<svg style="left:385px;top:501px" width="20" height="18" viewBox="0 0 20 18" fill="#767676"><path d="M2.5 0.8h9.5l-2.6 2.6H3.4v11.2h11.2V8.6l2.6-2.6v8.6a3.2 3.2 0 0 1-3.2 3.2H3.2A3.2 3.2 0 0 1 0 14.6V4A3.2 3.2 0 0 1 2.5 0.8z"/><path d="M15 2.2l2.6 2.6-7.8 7.8-3.6.9.9-3.6z"/><path d="M16 1.2l1.3-1.2 2.6 2.6-1.2 1.3z"/></svg>
<svg style="left:386px;top:533px" width="18" height="21" viewBox="0 0 18 21" fill="none" stroke="#767676" stroke-width="1.5"><path d="M5.8 4V1.6A.9.9 0 0 1 6.7.75h4.6a.9.9 0 0 1 .9.85V4"/><path d="M0 4.2h18"/><path d="M2.75 7.5h12.5v12.3a.5.5 0 0 1-.5.5H3.25a.5.5 0 0 1-.5-.5z"/><path d="M6 8v11.5M9 8v11.5M12 8v11.5" stroke-width="1.4"/></svg>
<svg style="left:385px;top:571px" width="20" height="22" viewBox="0 0 20 22" fill="none" stroke="#767676" stroke-width="2.9" stroke-linecap="round"><path d="M10 1.5v7.5"/><path d="M5 4.7a8 8 0 1 0 10 0"/></svg>
<svg style="left:385px;top:631px" width="24" height="20" viewBox="0 0 24 20" fill="#767676"><path d="M1 0h2.5v3.8H1A1 1 0 0 1 0 2.8V1a1 1 0 0 1 1-1z"/><path d="M5 0h14.5a2 2 0 0 1 2 2v14H10a2.5 2.5 0 0 0-2.5 2.5V18.6A3 3 0 0 1 4.8 16V1z"/><path d="M10 17h14c-.3 1.8-1.3 3-3 3H8c1.2-.6 1.9-1.6 2-3z"/></svg>
<svg style="left:385px;top:667px" width="19" height="18" viewBox="0 0 19 18" fill="#767676"><path fill-rule="evenodd" d="M9.5 0a9.3 9 0 1 1 0 18a9.3 9 0 1 1 0-18zM9.5 3.2L4.4 8.3l1.4 1.4 2.7-2.7v7.3h2v-7.3l2.7 2.7 1.4-1.4z"/></svg>
<svg style="left:385px;top:702px" width="18" height="20" viewBox="0 0 18 20" fill="none" stroke="#767676" stroke-width="2.3" stroke-linecap="round"><path d="M15.5 8.5L8 16a4 4 0 0 1-5.7-5.7l8.5-8.5a2.7 2.7 0 0 1 3.8 3.8L6.8 13.4a1.3 1.3 0 0 1-1.9-1.9L11.8 4.6"/></svg>
</body></html>
